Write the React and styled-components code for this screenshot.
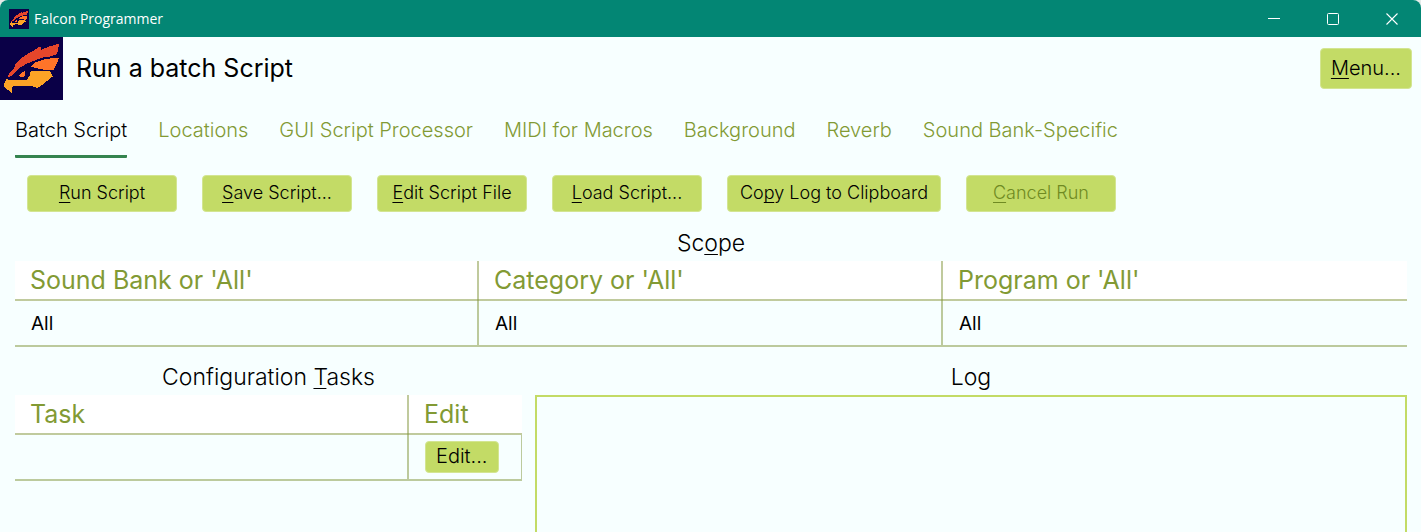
import React, { useState } from "react";
import styled, { createGlobalStyle, css } from "styled-components";

const GlobalStyle = createGlobalStyle`
  *, *::before, *::after { box-sizing: border-box; }
  html { background: #e4ebe9; }
  body { margin: 0; overflow: hidden; }
  body, button, textarea { font-family: Inter, "Liberation Sans", sans-serif; }
`;

const colors = {
  bar: "#038674",
  page: "#f7ffff",
  lime: "#c3db66",
  olive: "#829a34",
  line: "rgba(130, 150, 60, 0.5)",
  accent: "#35844f",
};

const Window = styled.div`
  display: flex;
  flex-direction: column;
  height: 100vh;
  background: ${colors.page};
  color: #000;
  border-radius: 8px 8px 0 0;
  overflow: hidden;
`;

const TitleBar = styled.header`
  display: flex;
  align-items: center;
  height: 37px;
  padding-left: 9px;
  background: ${colors.bar};
  color: #fff;
`;

const WindowTitle = styled.span`
  flex: 1;
  margin-left: 5px;
  font: 14px/20px "Open Sans", "Noto Sans", sans-serif;
`;

const CaptionButton = styled.button`
  display: flex;
  align-items: center;
  justify-content: center;
  width: 59px;
  height: 37px;
  padding: 0;
  border: 0;
  background: none;
  color: inherit;
`;

const PageHeader = styled.div`
  display: flex;
  align-items: center;
  height: 63px;
  padding-right: 9px;
`;

const PageTitle = styled.h1`
  flex: 1;
  margin: 0 0 0 13px;
  padding-bottom: 2px;
  font-size: 25px;
  font-weight: 400;
  line-height: 32px;
`;

const Button = styled.button`
  min-width: ${(p) => p.$minWidth || 0}px;
  height: ${(p) => p.$height || 37}px;
  padding: 0 ${(p) => p.$pad || 12}px 2px;
  border: 1px solid #d3e592;
  border-radius: 4px;
  background: ${colors.lime};
  color: #000;
  font-size: ${(p) => p.$size || 18}px;
  font-weight: 300;
  line-height: 24px;
  white-space: nowrap;
  &:disabled { color: #6f8a22; }
`;

const Key = styled.span`
  text-decoration: underline;
  text-decoration-thickness: 1px;
  text-underline-offset: 3px;
  text-decoration-skip-ink: none;
`;

const Tabs = styled.nav`
  display: flex;
  gap: 31px;
  padding: 14px 15px 0;
`;

const Tab = styled.button`
  height: 44px;
  padding: 0 0 13px;
  border: 0;
  background: none;
  color: ${colors.olive};
  font-size: 20px;
  font-weight: 300;
  line-height: 30px;
  white-space: nowrap;
  ${(p) => p.$active && css`
    color: #000;
    background: linear-gradient(${colors.accent}, ${colors.accent}) bottom / 100% 3px no-repeat;
    border-radius: 1px;
  `}
`;

const Toolbar = styled.div`
  display: flex;
  gap: 25px;
  padding: 17px 27px 0;
`;

const Content = styled.main`
  flex: 1;
  display: flex;
  flex-direction: column;
  min-height: 0;
  padding: 15px 14px 0 15px;
`;

const Heading = styled.h2`
  display: block;
  margin: 0;
  padding-bottom: 2px;
  font-size: 23px;
  font-weight: 300;
  line-height: 32px;
  text-align: center;
`;

const DataTable = styled.table`
  width: 100%;
  table-layout: fixed;
  border-collapse: separate;
  border-spacing: 0;
  text-align: left;
`;

const HeadCell = styled.th`
  width: ${(p) => p.$width || "auto"};
  height: 40px;
  padding: 0 15px 2px;
  border: 0 solid ${colors.line};
  background: linear-gradient(${colors.line}, ${colors.line}) left bottom / 100% 2px no-repeat border-box #fff;
  color: ${colors.olive};
  font-size: 25px;
  font-weight: 400;
  line-height: 32px;
  &:not(:last-child) { border-right-width: 2px; }
`;

const Cell = styled.td`
  height: 46px;
  padding: ${(p) => (p.$closed ? 0 : 2)}px 16px 0;
  border: 0 solid ${colors.line};
  border-bottom-width: 2px;
  font-size: 19px;
  line-height: 24px;
  &:not(:last-child) { border-right-width: 2px; }
  ${(p) => p.$closed && css`border-right-width: 1px;`}
`;

const Lower = styled.div`
  flex: 1;
  display: grid;
  grid-template-columns: 507fr 872fr;
  gap: 13px;
  margin-top: 14px;
`;

const LogPanel = styled.section`
  display: flex;
  flex-direction: column;
`;

const LogBox = styled.textarea`
  flex: 1;
  width: 100%;
  padding: 8px;
  border: 2px solid ${colors.lime};
  border-bottom: 0;
  background: transparent;
  outline: 0;
  resize: none;
  font-size: 18px;
`;

function Falcon({ size }) {
  return (
    <svg width={size} height={size} viewBox="0 0 189 189" shapeRendering="crispEdges" aria-hidden="true">
      <path fill="#0a0047" d="M0 0h189v189H0z" />
      <path fill="#e6462b" d="M22 120 30 107 42 93 48 78 60 68 75 55 98 43 121 27 124 38 149 28 177 20 174 42 168 53 150 59 126 62 104 71 83 79 62 90 47 105 32 118Z" />
      <path fill="#ff7429" d="M93 88 108 75 135 66 177 62 172 77 162 97 157 100 136 99 105 93Z" />
      <path fill="#ff7429" d="M55 117 65 107 75 101 75 117 66 120Z" />
      <path fill="#fca326" d="M12 140 20 125 26 128 54 130 81 130 86 120 92 114 89 106 96 102 150 103 159 118 141 132 122 147 112 153 103 149 84 146 40 147 36 153 35 167 22 158 13 149Z" />
    </svg>
  );
}

const tabs = ["Batch Script", "Locations", "GUI Script Processor", "MIDI for Macros", "Background", "Reverb", "Sound Bank-Specific"];

const actions = [
  ["", "R", "un Script"],
  ["", "S", "ave Script..."],
  ["", "E", "dit Script File"],
  ["", "L", "oad Script..."],
  ["Co", "p", "y Log to Clipboard"],
  ["", "C", "ancel Run"],
];

const scope = ["Sound Bank or 'All'", "Category or 'All'", "Program or 'All'"];

export default function App() {
  const [active, setActive] = useState(0);
  return (
    <>
      <GlobalStyle />
      <Window>
        <TitleBar>
          <Falcon size={20} />
          <WindowTitle>Falcon Programmer</WindowTitle>
          <CaptionButton aria-label="Minimize">
            <svg width="12" height="12" stroke="currentColor"><path d="M0 5.5h12" /></svg>
          </CaptionButton>
          <CaptionButton aria-label="Maximize">
            <svg width="12" height="12" fill="none" stroke="currentColor"><rect x=".5" y=".5" width="11" height="11" rx="1" /></svg>
          </CaptionButton>
          <CaptionButton aria-label="Close">
            <svg width="12" height="12" stroke="currentColor" strokeWidth="1.1"><path d="m.5.5 11 11m0-11-11 11" /></svg>
          </CaptionButton>
        </TitleBar>
        <PageHeader>
          <Falcon size={63} />
          <PageTitle>Run a batch Script</PageTitle>
          <Button $size={20} $height={41} $pad={10}><Key>M</Key>enu...</Button>
        </PageHeader>
        <Tabs role="tablist">
          {tabs.map((name, i) => (
            <Tab key={name} role="tab" aria-selected={i === active} $active={i === active} onClick={() => setActive(i)}>{name}</Tab>
          ))}
        </Tabs>
        <Toolbar>
          {actions.map(([before, key, after]) => (
            <Button key={after} $minWidth={150} disabled={after === "ancel Run"}>{before}<Key>{key}</Key>{after}</Button>
          ))}
        </Toolbar>
        <Content>
          <Heading>Sc<Key>o</Key>pe</Heading>
          <DataTable>
            <thead>
              <tr>{scope.map((name) => <HeadCell key={name} scope="col">{name}</HeadCell>)}</tr>
            </thead>
            <tbody>
              <tr>{scope.map((name) => <Cell key={name}>All</Cell>)}</tr>
            </tbody>
          </DataTable>
          <Lower>
            <section>
              <Heading>Configuration <Key>T</Key>asks</Heading>
              <DataTable>
                <thead>
                  <tr>
                    <HeadCell scope="col">Task</HeadCell>
                    <HeadCell scope="col" $width="113px">Edit</HeadCell>
                  </tr>
                </thead>
                <tbody>
                  <tr>
                    <Cell />
                    <Cell $closed><Button $size={20} $height={32} $pad={10}>Edit...</Button></Cell>
                  </tr>
                </tbody>
              </DataTable>
            </section>
            <LogPanel>
              <Heading as="label" htmlFor="log">Log</Heading>
              <LogBox id="log" readOnly />
            </LogPanel>
          </Lower>
        </Content>
      </Window>
    </>
  );
}
